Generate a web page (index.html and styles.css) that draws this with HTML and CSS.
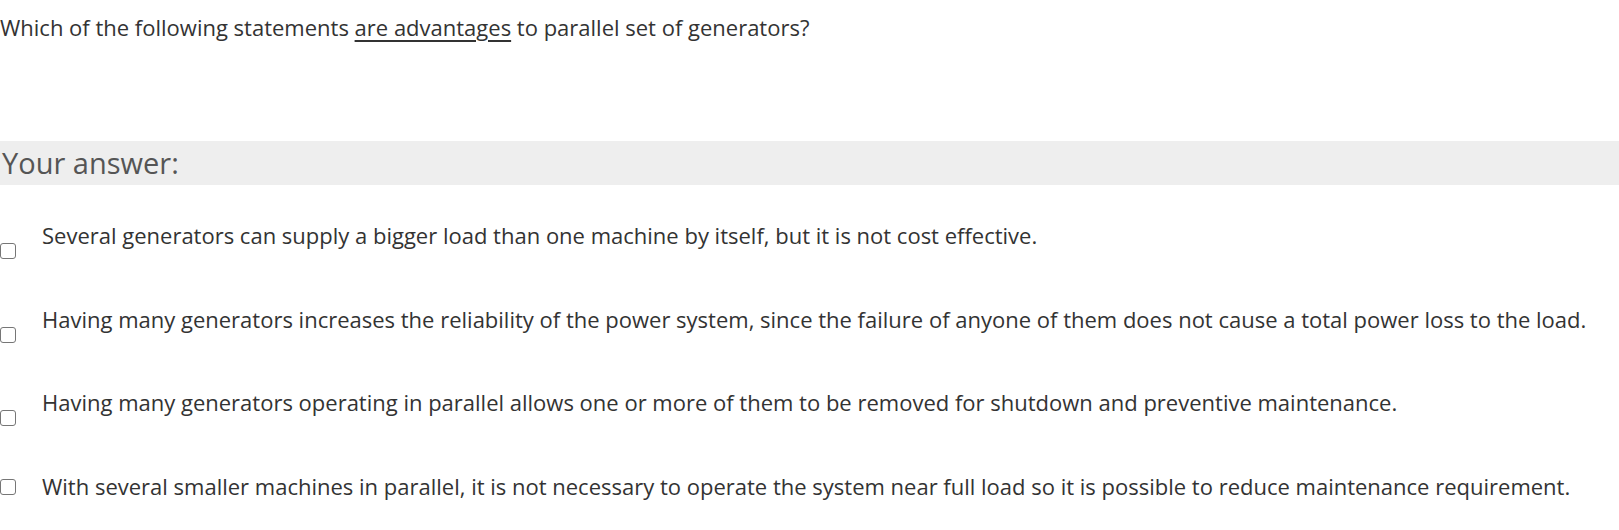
FILE: index.html
```html
<!DOCTYPE html>
<html lang="en">
<head>
<meta charset="utf-8">
<title>Question</title>
<link rel="stylesheet" href="styles.css">
</head>
<body>
<div class="question">
  <p class="question-text">Which of the following statements <u>are advantages</u> to parallel set of generators?</p>
</div>
<div class="answer-head">Your answer:</div>
<div class="options">
  <label class="option">
    <span class="box"></span>
    <span class="option-text">Several generators can supply a bigger load than one machine by itself, but it is not cost effective.</span>
  </label>
  <label class="option">
    <span class="box"></span>
    <span class="option-text">Having many generators increases the reliability of the power system, since the failure of anyone of them does not cause a total power loss to the load.</span>
  </label>
  <label class="option">
    <span class="box"></span>
    <span class="option-text">Having many generators operating in parallel allows one or more of them to be removed for shutdown and preventive maintenance.</span>
  </label>
  <label class="option option-inline">
    <span class="box"></span>
    <span class="option-text">With several smaller machines in parallel, it is not necessary to operate the system near full load so it is possible to reduce maintenance requirement.</span>
  </label>
</div>
</body>
</html>
```
FILE: styles.css
```css
html, body {
  margin: 0;
  padding: 0;
  background: #fff;
}
body {
  font-family: "Open Sans", "Noto Sans", sans-serif;
  color: #333;
  width: 1619px;
}
.question {
  padding-top: 11px;
}
.question-text {
  margin: 0;
  font-size: 22px;
  line-height: 33px;
}
.question-text u {
  text-decoration-thickness: 1.5px;
  text-underline-offset: 4px;
}
.answer-head {
  margin-top: 97px;
  height: 44px;
  line-height: 44px;
  background: #eeeeee;
  font-size: 29px;
  color: #555;
  padding-left: 2px;
}
.options {
  display: flex;
  flex-direction: column;
  gap: 43.5px;
  padding-top: 34px;
}
.option {
  display: flex;
  align-items: flex-start;
  gap: 26px;
}
.box {
  flex: none;
  width: 14px;
  height: 14px;
  border: 1px solid #767676;
  border-radius: 3px;
  margin-top: 24px;
  background: #fff;
}
.option-inline .box {
  margin-top: 9.5px;
}
.option-text {
  font-size: 22px;
  line-height: 33px;
}
```
